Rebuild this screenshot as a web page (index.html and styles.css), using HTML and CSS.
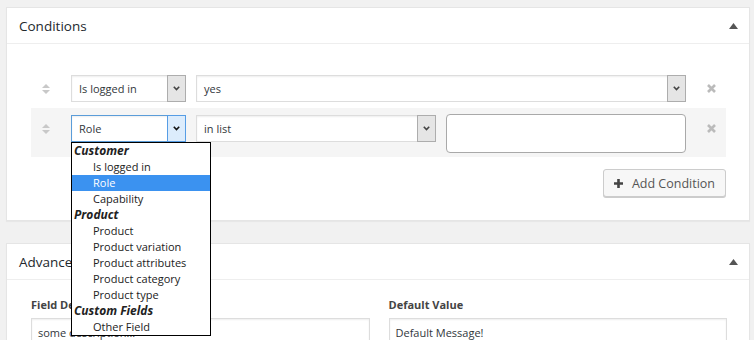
FILE: index.html
```html
<!DOCTYPE html>
<html lang="en">
<head>
    <meta charset="UTF-8">
    <meta name="viewport" content="width=device-width, initial-scale=1.0">
    <title>Conditions</title>
    <link rel="stylesheet" href="styles.css">
</head>
<body>
    <div class="page">
        <div class="panel">
            <div class="panel-head">
                <h2>Conditions</h2>
                <svg class="toggle" width="9" height="6" viewBox="0 0 9 6"><path d="M4.5 0L9 6H0z"/></svg>
            </div>
            <div class="panel-body conditions">
                <div class="cond-row">
                    <span class="handle"><svg width="8" height="10" viewBox="0 0 8 10"><path d="M4 0L8 4H0zM4 10L0 6h8z"/></svg></span>
                    <div class="select w-field">
                        <span class="select-value">Is logged in</span>
                        <span class="select-arrow"><svg width="7" height="5" viewBox="0 0 7 5"><path d="M0.8 0.8L3.5 3.6 6.2 0.8"/></svg></span>
                    </div>
                    <div class="select w-wide">
                        <span class="select-value">yes</span>
                        <span class="select-arrow"><svg width="7" height="5" viewBox="0 0 7 5"><path d="M0.8 0.8L3.5 3.6 6.2 0.8"/></svg></span>
                    </div>
                    <span class="remove"><svg width="9" height="9" viewBox="0 0 9 9"><path d="M1 1L8 8M8 1L1 8"/></svg></span>
                </div>
                <div class="cond-row alt">
                    <span class="handle"><svg width="8" height="10" viewBox="0 0 8 10"><path d="M4 0L8 4H0zM4 10L0 6h8z"/></svg></span>
                    <div class="select-wrap">
                        <div class="select w-field focused">
                            <span class="select-value">Role</span>
                            <span class="select-arrow"><svg width="7" height="5" viewBox="0 0 7 5"><path d="M0.8 0.8L3.5 3.6 6.2 0.8"/></svg></span>
                        </div>
                        <ul class="dropdown">
                            <li class="group">Customer</li>
                            <li>Is logged in</li>
                            <li class="active">Role</li>
                            <li>Capability</li>
                            <li class="group">Product</li>
                            <li>Product</li>
                            <li>Product variation</li>
                            <li>Product attributes</li>
                            <li>Product category</li>
                            <li>Product type</li>
                            <li class="group">Custom Fields</li>
                            <li>Other Field</li>
                        </ul>
                    </div>
                    <div class="select w-op">
                        <span class="select-value">in list</span>
                        <span class="select-arrow"><svg width="7" height="5" viewBox="0 0 7 5"><path d="M0.8 0.8L3.5 3.6 6.2 0.8"/></svg></span>
                    </div>
                    <div class="textbox"></div>
                    <span class="remove"><svg width="9" height="9" viewBox="0 0 9 9"><path d="M1 1L8 8M8 1L1 8"/></svg></span>
                </div>
                <div class="actions">
                    <button class="btn">
                        <svg width="9" height="9" viewBox="0 0 9 9"><path d="M3.2 0h2.6v3.2H9v2.6H5.8V9H3.2V5.8H0V3.2h3.2z"/></svg>
                        Add Condition
                    </button>
                </div>
            </div>
        </div>

        <div class="panel">
            <div class="panel-head">
                <h2>Advanced</h2>
                <svg class="toggle" width="9" height="6" viewBox="0 0 9 6"><path d="M4.5 0L9 6H0z"/></svg>
            </div>
            <div class="panel-body fields">
                <div class="field">
                    <label>Field Description</label>
                    <div class="input">some description...</div>
                </div>
                <div class="field">
                    <label>Default Value</label>
                    <div class="input">Default Message!</div>
                </div>
            </div>
        </div>
    </div>
</body>
</html>
```

FILE: styles.css
```css
body {
    margin: 0;
    background: #f1f1f1;
    font-family: "Open Sans", "Liberation Sans", sans-serif;
    color: #32373c;
}
.page {
    padding: 7px 4px 0 6px;
}
.panel {
    background: white;
    border: 1px solid #e5e5e5;
    box-shadow: 0 1px 1px rgba(0,0,0,0.04);
    margin-bottom: 22px;
}
.panel-head {
    display: flex;
    align-items: center;
    justify-content: space-between;
    height: 35px;
    padding: 0 11px 0 12px;
    border-bottom: 1px solid #eee;
}
.panel-head h2 {
    margin: 0;
    font-size: 13.5px;
    font-weight: normal;
    color: #23282d;
}
.toggle { fill: #555; }

/* conditions */
.conditions {
    padding: 24px 23px 23px 24px;
}
.cond-row {
    display: flex;
    align-items: flex-start;
    padding: 6px 0 4px;
}
.cond-row.alt {
    background: #f5f5f5;
    margin-top: 2px;
}
.handle {
    width: 40px;
    height: 27px;
    margin-top: 1px;
    padding-left: 11px;
    box-sizing: border-box;
    display: flex;
    align-items: center;
    fill: #c8c8c8;
}
.select-wrap {
    position: relative;
}
.select {
    display: flex;
    height: 27px;
    margin-top: 1px;
    margin-right: 10px;
    box-sizing: border-box;
    border: 1px solid #ddd;
    background: white;
    box-shadow: inset 0 1px 2px rgba(0,0,0,0.07);
    font-size: 11px;
    color: #32373c;
}
.select-wrap .select { margin-right: 10px; }
.w-field { width: 115px; }
.w-wide { width: 490px; margin-right: 0; }
.w-op { width: 240px; }
.select-value {
    flex: 1;
    padding-left: 7px;
    line-height: 25px;
}
.select-arrow {
    width: 17px;
    margin: -1px -1px -1px 0;
    border: 1px solid #adadad;
    background: #e5e5e5;
    display: flex;
    align-items: center;
    justify-content: center;
}
.select-arrow svg {
    fill: none;
    stroke: #444;
    stroke-width: 1.6;
}
.select.focused { border-color: #5b9dd9; }
.select.focused .select-arrow {
    background: #dcecfc;
    border-color: #569de5;
}
.select.focused .select-arrow svg { stroke: #111; }

.textbox {
    width: 240px;
    height: 39px;
    box-sizing: border-box;
    border: 1px solid #a9a9a9;
    border-radius: 4px;
    background: white;
}
.remove {
    width: 40px;
    height: 27px;
    margin-top: 1px;
    padding-left: 21px;
    box-sizing: border-box;
    display: flex;
    align-items: center;
}
.remove svg {
    stroke: #bbb;
    stroke-width: 2.6;
}
.cond-row.alt .remove { margin-top: 1px; }

.dropdown {
    position: absolute;
    top: 28px;
    left: 0;
    z-index: 10;
    width: 140px;
    margin: 0;
    padding: 0;
    list-style: none;
    box-sizing: border-box;
    border: 1px solid #000;
    background: white;
    font-size: 11px;
    line-height: 16px;
    color: #222;
}
.dropdown li {
    padding-left: 21px;
    height: 16px;
    white-space: nowrap;
}
.dropdown li.group {
    padding-left: 2px;
    font-weight: bold;
    font-style: italic;
    font-size: 12px;
}
.dropdown li.active {
    background: #3b92f0;
    color: white;
}

.actions {
    display: flex;
    justify-content: flex-end;
    margin-top: 12px;
}
.btn {
    display: flex;
    align-items: center;
    gap: 9px;
    height: 28px;
    padding: 0 10px;
    border: 1px solid #ccc;
    border-radius: 3px;
    background: #f7f7f7;
    box-shadow: 0 1px 0 #ccc;
    font-family: inherit;
    font-size: 12.5px;
    color: #555;
    cursor: pointer;
}
.btn svg { fill: #444; }

/* advanced fields */
.fields {
    display: flex;
    gap: 19px;
    padding: 16px 22px 20px 24px;
}
.field {
    flex: 1;
}
.field label {
    display: block;
    font-size: 11px;
    font-weight: bold;
    line-height: 18px;
    color: #444;
    margin-bottom: 4px;
}
.input {
    height: 30px;
    box-sizing: border-box;
    padding: 0 6px;
    border: 1px solid #ddd;
    box-shadow: inset 0 1px 2px rgba(0,0,0,0.07);
    font-size: 11px;
    line-height: 28px;
    color: #32373c;
}
```
